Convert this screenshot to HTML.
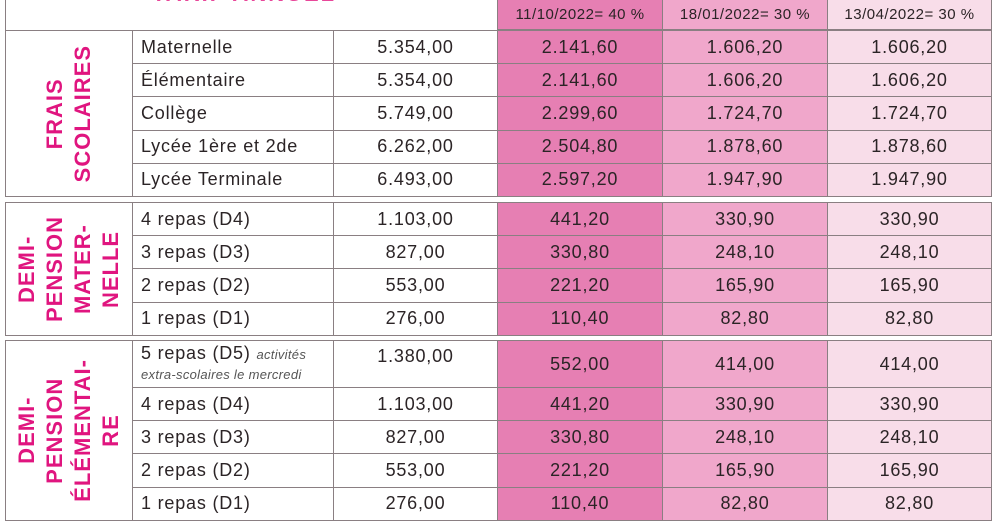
<!DOCTYPE html>
<html><head><meta charset="utf-8"><style>
*{margin:0;padding:0;box-sizing:border-box}
body{width:1000px;height:500px;overflow:hidden;background:#fff;font-family:"Liberation Sans",sans-serif;color:#2b2426;position:relative}
.a{position:absolute}
.c{position:absolute;display:flex;align-items:center;font-size:18px;letter-spacing:0.8px;border:1px solid #8a7f82;white-space:nowrap}
.p1{background:#e67fb3}.p2{background:#f0a7cb}.p3{background:#f8dde9}
.v{position:absolute;writing-mode:vertical-rl;transform:rotate(180deg);color:#e0157f;font-weight:bold;font-size:22px;line-height:28px;text-align:center;letter-spacing:1px}
.box{position:absolute;border:1.5px solid #8a7f82}
</style></head><body>
<div class="a" style="left:152px;top:-19px;font-size:22px;font-weight:bold;color:#e8479a;letter-spacing:2px">TARIF ANNUEL</div>
<div class="box" style="left:5px;top:-2px;width:493px;height:33px;border-top:none"></div>
<div class="c p1" style="left:497px;top:-2px;width:166px;height:32px;justify-content:center;font-size:15px;letter-spacing:0.5px">11/10/2022= 40 %</div>
<div class="c p2" style="left:662px;top:-2px;width:166px;height:32px;justify-content:center;font-size:15px;letter-spacing:0.5px">18/01/2022= 30 %</div>
<div class="c p3" style="left:827px;top:-2px;width:165px;height:32px;justify-content:center;font-size:15px;letter-spacing:0.5px">13/04/2022= 30 %</div>
<div id="t"></div>
<script>
const groups=[
 {top:30,rows:[["Maternelle","5.354,00","2.141,60","1.606,20","1.606,20"],["Élémentaire","5.354,00","2.141,60","1.606,20","1.606,20"],["Collège","5.749,00","2.299,60","1.724,70","1.724,70"],["Lycée 1ère et 2de","6.262,00","2.504,80","1.878,60","1.878,60"],["Lycée Terminale","6.493,00","2.597,20","1.947,90","1.947,90"]],label:"FRAIS<br>SCOLAIRES"},
 {top:202,rows:[["4 repas (D4)","1.103,00","441,20","330,90","330,90"],["3 repas (D3)","827,00","330,80","248,10","248,10"],["2 repas (D2)","553,00","221,20","165,90","165,90"],["1 repas (D1)","276,00","110,40","82,80","82,80"]],label:"DEMI-<br>PENSION<br>MATER-<br>NELLE"},
 {top:340,rows:[["5 repas (D5)","1.380,00","552,00","414,00","414,00",47],["4 repas (D4)","1.103,00","441,20","330,90","330,90"],["3 repas (D3)","827,00","330,80","248,10","248,10"],["2 repas (D2)","553,00","221,20","165,90","165,90"],["1 repas (D1)","276,00","110,40","82,80","82,80"]],label:"DEMI-<br>PENSION<br>ÉLÉMENTAI-<br>RE"}
];
let h="";
for(const g of groups){
 let y=g.top;const y0=y;
 for(const r of g.rows){
  const rh=r[5]||33.2;
  let lab=r[0];
  if(r[5]) lab=`<div style="line-height:18px;padding-top:3px;align-self:flex-start"><span>${r[0]}</span> <i style="font-size:13px;color:#555;letter-spacing:0.3px">activités<br>extra-scolaires le mercredi</i></div>`;
  h+=`<div class="c" style="left:132px;top:${y}px;width:202px;height:${rh+1}px;padding-left:8px">${lab}</div>`;
  h+=`<div class="c" style="left:333px;top:${y}px;width:165px;height:${rh+1}px;justify-content:center;${r[5]?'align-items:flex-start;padding-top:5px':''}">${r[1]}</div>`;
  h+=`<div class="c p1" style="left:497px;top:${y}px;width:166px;height:${rh+1}px;justify-content:center">${r[2]}</div>`;
  h+=`<div class="c p2" style="left:662px;top:${y}px;width:166px;height:${rh+1}px;justify-content:center">${r[3]}</div>`;
  h+=`<div class="c p3" style="left:827px;top:${y}px;width:165px;height:${rh+1}px;justify-content:center">${r[4]}</div>`;
  y+=rh;
 }
 h+=`<div class="box" style="left:5px;top:${y0}px;width:987px;height:${y-y0+1}px"></div>`;
 h+=`<div class="box" style="left:5px;top:${y0}px;width:128px;height:${y-y0+1}px;display:flex;align-items:center;justify-content:center"><div class="v" style="position:static">${g.label}</div></div>`;
}
document.getElementById("t").innerHTML=h;
</script>
</body></html>
